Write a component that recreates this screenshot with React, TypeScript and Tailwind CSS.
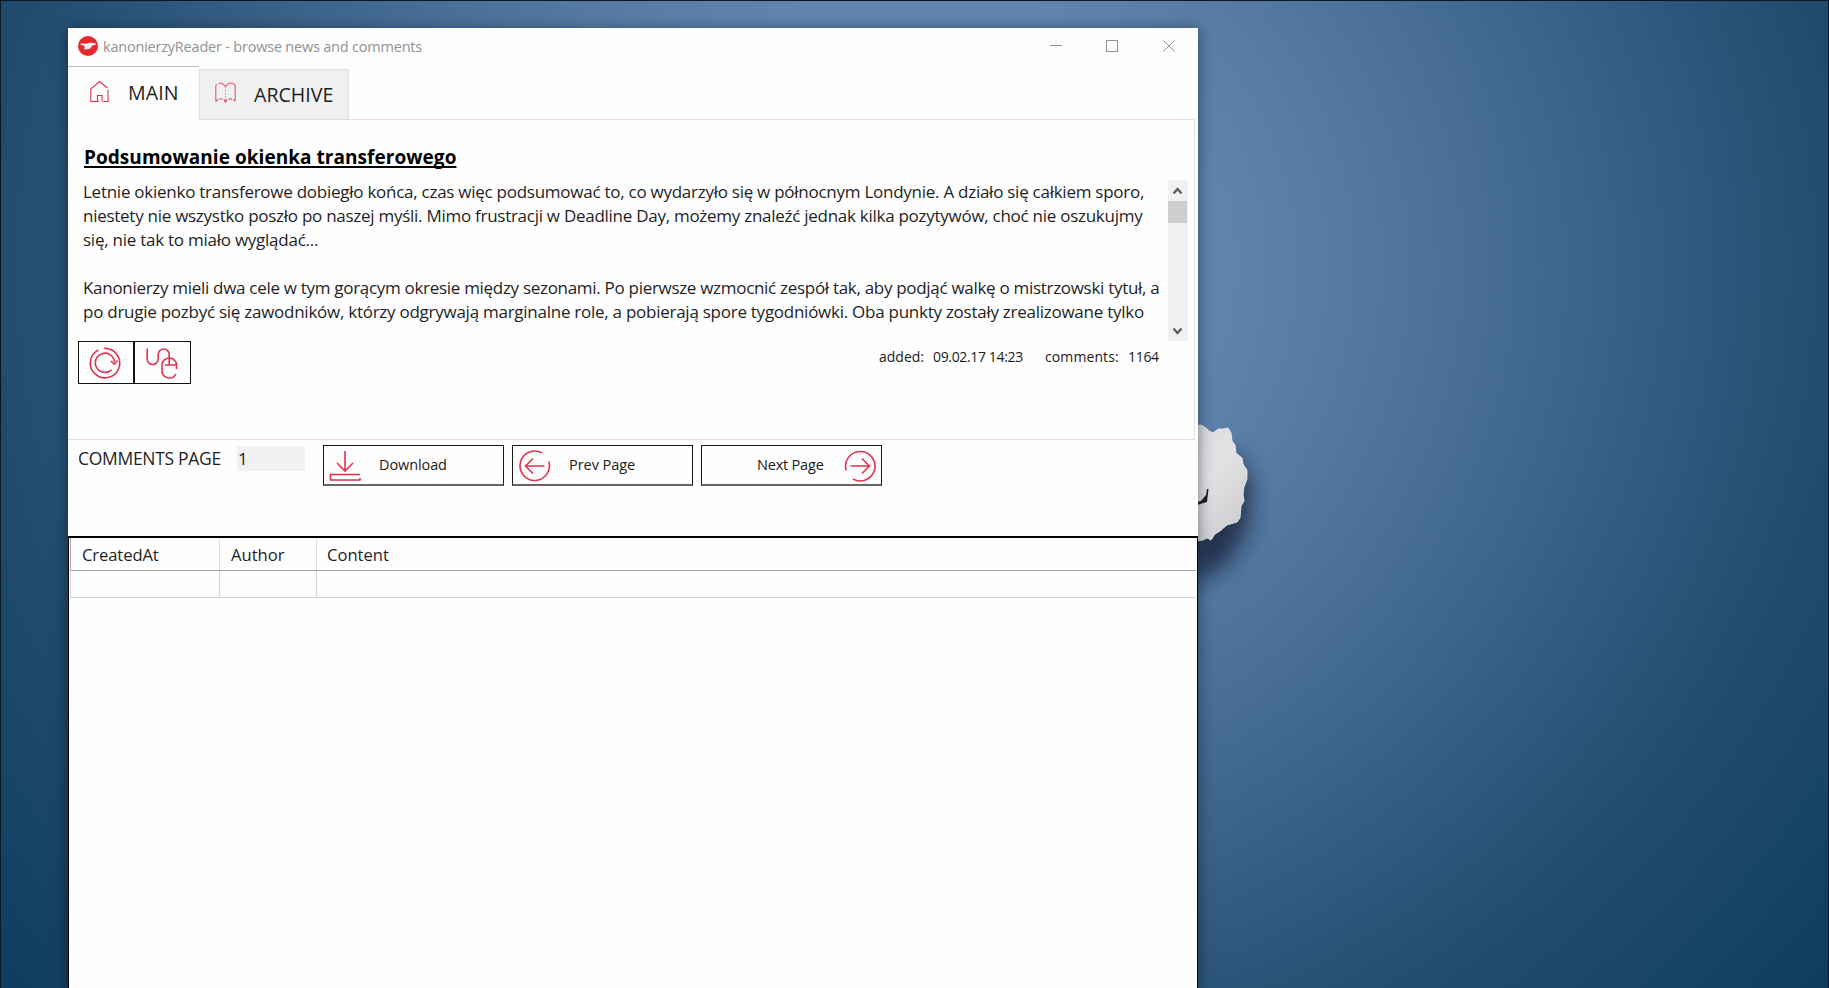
import type { ReactNode } from "react";

const RED = "#e2324f";

const LINES = [
  { text: "Letnie okienko transferowe dobiegło końca, czas więc podsumować to, co wydarzyło się w północnym Londynie. A działo się całkiem sporo,", cls: "tracking-[-0.26px]" },
  { text: "niestety nie wszystko poszło po naszej myśli. Mimo frustracji w Deadline Day, możemy znaleźć jednak kilka pozytywów, choć nie oszukujmy", cls: "tracking-[-0.27px]" },
  { text: "się, nie tak to miało wyglądać...", cls: "tracking-[-0.25px]" },
  { text: "\u00a0", cls: "" },
  { text: "Kanonierzy mieli dwa cele w tym gorącym okresie między sezonami. Po pierwsze wzmocnić zespół tak, aby podjąć walkę o mistrzowski tytuł, a", cls: "tracking-[-0.3px]" },
  { text: "po drugie pozbyć się zawodników, którzy odgrywają marginalne role, a pobierają spore tygodniówki. Oba punkty zostały zrealizowane tylko", cls: "tracking-[-0.26px]" },
];

function Icon({ w, h, sw = 1.6, children }: { w: number; h: number; sw?: number; children: ReactNode }) {
  return (
    <svg width={w} height={h} viewBox={`0 0 ${w} ${h}`} fill="none" stroke={RED} strokeWidth={sw} className="shrink-0">
      {children}
    </svg>
  );
}

function Logo() {
  return (
    <svg width="20" height="20" viewBox="0 0 20 20" className="shrink-0">
      <circle cx="10" cy="10" r="10" fill="#e8262b" />
      <path d="M2 8.300L3.500 7.500L8 7.700L12 6.800L15 6.800L17.800 7.400L18 8.400L14.500 9.600L13.200 11.300L11.500 13L7.500 13.400L6 12.900L6.800 11.200L5.800 9.800Z" fill="#fdeeee" />
    </svg>
  );
}

function TitleBar() {
  return (
    <header className="flex h-[38px] shrink-0 items-center pb-[2px] pl-[10px]">
      <Logo />
      <span className="mt-[1px] ml-[5px] text-[14.5px] leading-[20px] tracking-[-0.21px] text-[#929292]">
        kanonierzyReader - browse news and comments
      </span>
      <svg width="126" height="14" viewBox="0 0 126 14" fill="none" stroke="#8d958d" strokeWidth="1" className="ml-auto mr-[22px]">
        <path d="M0 6.5H12" />
        <rect x="56.5" y="1.5" width="11" height="11" />
        <path d="M113.5 1.5L124.5 12.5M124.5 1.5L113.5 12.5" />
      </svg>
    </header>
  );
}

function Tabs() {
  return (
    <nav className="flex h-[54px] shrink-0">
      <div className="flex w-[131px] items-start border-t border-[#bdbdbd] pt-[12px] pl-[22px]">
        <Icon w={19} h={24} sw={1.1}>
          <path d="M18 10.5V22.5H13.5M12 22.5V16.5H7.5V22.5M9 22.5H0.8V10L9.5 2.5L17.5 9" />
        </Icon>
        <span className="ml-[19px] text-[19.6px] leading-[28px] tracking-[0.1px]">MAIN</span>
      </div>
      <div className="mt-[3px] flex w-[150px] items-start border border-[#e6dcdf] bg-[#f0f0f0] pt-[11px] pl-[15px]">
        <Icon w={21} h={23} sw={1.1}>
          <path d="M0.8 20.5V4.5L2 3M3.5 2.2H7L10.5 5.5L14 2.2H18L20.2 4.5V19.5" strokeOpacity=".8" />
          <path d="M1 20.5L3 18M4.500 18H7.500M9 18.500L10.500 21L12 18.500M13.500 18H17M18.500 18.500L20 20" />
          <path d="M10.500 6V20" strokeDasharray="1.500 1.500" strokeOpacity=".5" />
        </Icon>
        <span className="ml-[18px] text-[19.6px] leading-[28px]">ARCHIVE</span>
      </div>
      <div className="mr-[3px] grow border-b border-[#ecdadd]" />
    </nav>
  );
}

function ScrollBar() {
  return (
    <div className="flex h-[161px] w-[20px] shrink-0 flex-col items-center bg-[#f0f0f0]">
      <svg width="20" height="21" viewBox="0 0 20 21" fill="none" stroke="#606060" strokeWidth="2.400">
        <path d="M5.500 13.500L9.500 9L13.500 13.500" />
      </svg>
      <div className="h-[22px] w-[19px] self-start bg-[#cdcdcd]" />
      <div className="grow" />
      <svg width="20" height="21" viewBox="0 0 20 21" fill="none" stroke="#606060" strokeWidth="2.400">
        <path d="M5.500 8.500L9.500 13L13.500 8.500" />
      </svg>
    </div>
  );
}

function Article() {
  return (
    <main className="mr-[3px] flex h-[320px] shrink-0 flex-col border-r border-b border-r-[#ecdfe1] border-b-[#ecdadd]">
      <h1 className="mt-[23px] ml-[16px] h-[28px] w-max text-[19px] leading-[28px] font-bold tracking-[0.05px] text-black underline decoration-[1.5px] underline-offset-[2px] [text-decoration-skip-ink:none]">
        Podsumowanie okienka transferowego
      </h1>
      <div className="mt-[9px] flex justify-between pr-[6px] pl-[15px]">
        <div className="pt-[0.3px] text-[17px] leading-[23.86px] text-[#1e1e1e]">
          {LINES.map((line, i) => (
            <p key={i} className={`w-max whitespace-pre ${line.cls}`}>{line.text}</p>
          ))}
        </div>
        <ScrollBar />
      </div>
      <div className="flex justify-between pl-[10px]">
        <div className="flex h-[43px]">
          <div className="flex w-[56px] items-center justify-center border border-[#111] pr-[3px]">
            <Icon w={32} h={32}>
              <path d="M15.200 1.400A14.700 14.700 0 1 1 9.500 2.900" />
              <path d="M22.500 22.800A9.600 9.600 0 1 1 25.500 15M21.800 14L25.300 17.200L28.500 13.500" />
            </Icon>
          </div>
          <div className="flex w-[57px] items-center justify-center border border-[#111] pr-[2px]">
            <Icon w={32} h={32}>
              <path d="M1.200 1.500V12A5.500 5.500 0 0 0 12.200 12V7.500A5.500 5.500 0 0 1 23.200 7.500V18" />
              <path d="M30.500 22V17.500A7.300 7.300 0 0 0 16 17.500V24A7.300 7.300 0 0 0 29.800 27M19 18H31" />
            </Icon>
          </div>
        </div>
        <div className="mr-[36px] flex pt-[5px] text-[14px] leading-[22px] text-[#1a1a1a]">
          <span className="w-[54px]">added:</span>
          <span className="w-[112px] tracking-[-0.35px]">09.02.17 14:23</span>
          <span className="w-[83px] tracking-[0.1px]">comments:</span>
          <span className="w-[30px] tracking-[-0.3px]">1164</span>
        </div>
      </div>
    </main>
  );
}

const BTN = "flex h-[41px] w-[181px] items-center border border-b-2 border-[#1a1a1a] border-b-[#666] text-[14.5px] leading-[20px] text-[#1a1a1a]";

function Pager() {
  return (
    <section className="flex h-[96px] shrink-0 items-start pt-[5px] pl-[10px] text-[#1e1e1e]">
      <span className="w-[159px] text-[17.5px] leading-[26px] tracking-[-0.3px]">COMMENTS PAGE</span>
      <div className="mt-[1px] mr-[18px] h-[25px] w-[68px] bg-[#f0f0f0] pl-px text-[17px] leading-[25px]">1</div>
      <div className="flex gap-[8px]">
        <button className={BTN}>
          <span className="ml-[5px]">
            <Icon w={32} h={32}>
              <path d="M16 2V22M8 14L16 22L24 14" />
              <path d="M31 25.500H1.500V31H31V29" />
            </Icon>
          </span>
          <span className="ml-[18px] tracking-[-0.1px]">Download</span>
        </button>
        <button className={BTN}>
          <span className="ml-[6px] pt-[2px]">
            <Icon w={32} h={32}>
              <path d="M23 3A14.700 14.700 0 1 0 29.800 11.500" />
              <path d="M25.500 16H7M14 8.500L6.500 16L14 23.500" />
            </Icon>
          </span>
          <span className="ml-[18px] tracking-[-0.05px]">Prev Page</span>
        </button>
        <button className={BTN}>
          <span className="ml-[55px] tracking-[-0.2px]">Next Page</span>
          <span className="mr-[5px] ml-auto pt-[2px]">
            <Icon w={32} h={32}>
              <path d="M2.200 20.500A14.700 14.700 0 1 1 9 29" />
              <path d="M6.500 16H25M18 8.500L25.500 16L18 23.500" />
            </Icon>
          </span>
        </button>
      </div>
    </section>
  );
}

function Grid() {
  return (
    <section className="flex grow flex-col border-2 border-r border-b-0 border-l border-black">
      <div className="mr-px ml-px flex h-[33px] shrink-0 border-b border-l border-[#a3a3a3] border-l-[#b5a9ab] text-[16.6px] leading-[33px] text-[#1e1e1e]">
        <div className="w-[149px] border-r border-[#dedede] pl-[11px] tracking-[-0.1px]">CreatedAt</div>
        <div className="w-[97px] border-r border-[#dedede] pl-[11px]">Author</div>
        <div className="grow pl-[10px]">Content</div>
      </div>
      <div className="mr-px ml-px flex h-[27px] shrink-0 border-b border-l border-[#dcd0d2]">
        <div className="w-[149px] border-r border-[#d8d0d2]" />
        <div className="w-[97px] border-r border-[#d8d0d2]" />
      </div>
    </section>
  );
}

function TornPaper() {
  return (
    <svg width="130" height="200" viewBox="0 0 130 200" className="absolute top-[399px] left-[1188px]">
      <defs>
        <filter id="soft" x="-50%" y="-50%" width="200%" height="200%">
          <feGaussianBlur stdDeviation="11" />
        </filter>
        <linearGradient id="paper" x1="0" y1="0" x2="0.6" y2="1">
          <stop offset="0" stopColor="#dddde0" />
          <stop offset="0.500" stopColor="#e2e1e3" />
          <stop offset="1" stopColor="#cfced2" />
        </linearGradient>
      </defs>
      <path d="M0 60L48 55L62 85L58 132L38 164L0 186Z" fill="#14233a" opacity=".8" filter="url(#soft)" />
      <path d="M0 26L12 25L17 28L20 31L24 33L29 29L34 29L39 28L42 33L43 41L46 45L47 53L53 58L54 64L58 70L58 79L55 87L54 95L55 101L52 106L51 118L48 122L38 125L31 131L26 134L22 140L18 138L14 140L0 142Z" fill="url(#paper)" stroke="#f0f1f4" strokeWidth="0.800" />
      <path d="M4 103L12 101L17 95L18 89L19.500 89L18 102L8 105Z" fill="#202020" />
    </svg>
  );
}

export default function App() {
  return (
    <div className="relative flex h-[988px] w-full overflow-hidden border-t border-r border-l border-[#0b1826] bg-[radial-gradient(ellipse_1200px_1125px_at_915px_265px,#6286b0_0%,#6185ae_24%,#567aa3_35%,#4a7098_45%,#3b6288_57%,#2b5578_69%,#214c6e_77%,#0f3c5e_100%)] pt-[27px] pl-[67px] font-['Open_Sans','Noto_Sans',sans-serif]">
      <TornPaper />
      <div className="relative flex h-[961px] w-[1130px] flex-col bg-[#fefefe] text-[#1e1e1e] shadow-[0_2px_14px_rgba(0,10,30,0.5)]">
        <TitleBar />
        <Tabs />
        <Article />
        <Pager />
        <Grid />
      </div>
    </div>
  );
}
